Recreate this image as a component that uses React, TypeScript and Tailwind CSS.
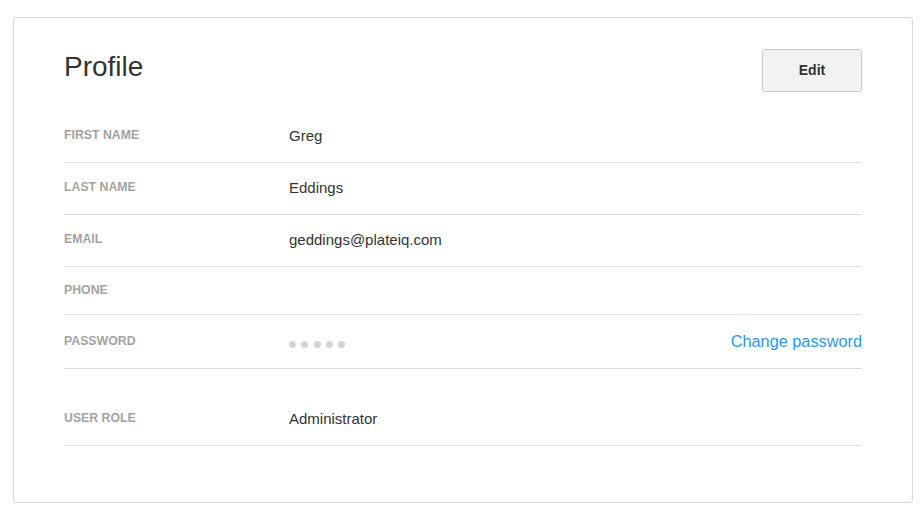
const rows = [
  { label: "First name", value: "Greg" },
  { label: "Last name", value: "Eddings" },
  { label: "Email", value: "geddings@plateiq.com" },
  { label: "Phone", value: "" },
];

function Label({ children, raised = true }: { children: React.ReactNode; raised?: boolean }) {
  return (
    <div
      className={
        raised
          ? "w-[225px] shrink-0 -translate-y-[2px] text-[12.3px] font-bold uppercase leading-[16px] text-[#a3a3a3]"
          : "w-[225px] shrink-0 text-[12.3px] font-bold uppercase leading-[16px] text-[#a3a3a3]"
      }
    >
      {children}
    </div>
  );
}

export default function App() {
  return (
    <div className="min-h-[520px] bg-white pl-[13px] pt-[17px] font-['Liberation_Sans',Arial,sans-serif]">
      <div className="w-[900px] rounded-[3px] border border-[#d9d9d9] px-[50px] pt-[31px] pb-[56px]">
        <div className="mb-[19px] flex items-start justify-between">
          <h1 className="mt-[2px] text-[28px] leading-[32px] text-[#333]">Profile</h1>
          <button className="h-[43px] w-[100px] rounded-[3px] border border-[#c8c8c8] bg-[#f2f2f2] text-[14px] font-bold text-[#333]">
            Edit
          </button>
        </div>

        <div>
          {rows.map((row) => (
            <div
              key={row.label}
              className="flex items-baseline border-b border-[#dedede] pt-[15px] pb-[16px]"
            >
              <Label raised={!!row.value}>{row.label}</Label>
              {row.value && (
                <div className="text-[15px] leading-[20px] text-[#333]">{row.value}</div>
              )}
            </div>
          ))}
          <div className="flex items-baseline border-b border-[#dedede] pt-[15px] pb-[16px]">
            <Label>Password</Label>
            <div className="flex flex-1 items-baseline justify-between">
              <div className="flex translate-y-[1px] items-center gap-[5.3px]">
                {[0, 1, 2, 3, 4].map((i) => (
                  <span key={i} className="h-[7px] w-[7px] rounded-full bg-[#d4d4d4]" />
                ))}
              </div>
              <a className="text-[16.3px] leading-[22px] text-[#2b98ef]" href="#">
                Change password
              </a>
            </div>
          </div>
        </div>

        <div className="mt-[25px]">
          <div className="flex items-baseline border-b border-[#dedede] pt-[15px] pb-[16px]">
            <Label>User role</Label>
            <div className="text-[15px] leading-[20px] text-[#333]">Administrator</div>
          </div>
        </div>
      </div>
    </div>
  );
}
